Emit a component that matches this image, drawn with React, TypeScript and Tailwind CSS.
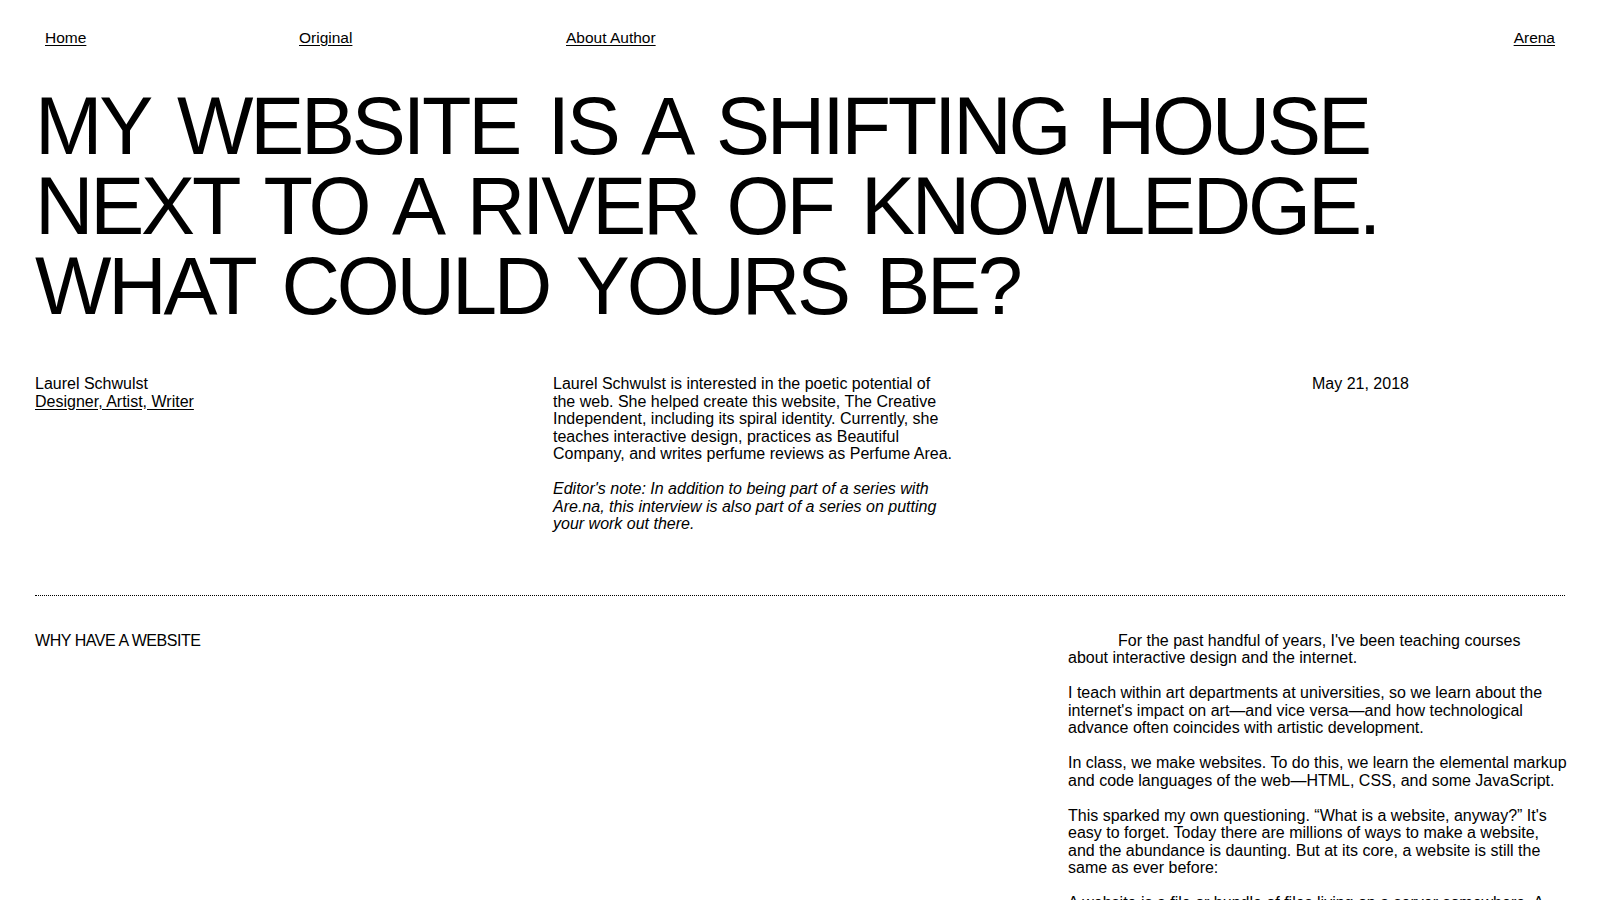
export default function App() {
  return (
    <div className="min-h-screen bg-white text-black font-['Liberation_Sans',Arial,sans-serif]">
      <nav className="flex pt-[29px] px-[45px] text-[15.5px] leading-[18px]">
        <a href="#" className="w-[254px] underline underline-offset-2">
          Home
        </a>
        <a href="#" className="w-[267px] underline underline-offset-2">
          Original
        </a>
        <a href="#" className="underline underline-offset-2">
          About Author
        </a>
        <a href="#" className="ml-auto underline underline-offset-2">
          Arena
        </a>
      </nav>

      <header className="px-[35px] mt-[39px]">
        <h1 className="text-[81px] leading-[80px] tracking-[-3.2px] [word-spacing:9px] font-normal">
          MY WEBSITE IS A SHIFTING HOUSE NEXT TO A RIVER OF KNOWLEDGE. WHAT COULD YOURS BE?
        </h1>
      </header>

      <section className="grid grid-cols-[518px_759px_1fr] px-[35px] mt-[49px] text-[16px] leading-[17.5px]">
        <div>
          <div>Laurel Schwulst</div>
          <a href="#" className="underline underline-offset-2">
            Designer, Artist, Writer
          </a>
        </div>
        <div className="max-w-[400px]">
          <p className="mb-[17.5px]">
            Laurel Schwulst is interested in the poetic potential of the web. She helped create this
            website, The Creative Independent, including its spiral identity. Currently, she teaches
            interactive design, practices as Beautiful Company, and writes perfume reviews as Perfume
            Area.
          </p>
          <p className="italic">
            Editor's note: In addition to being part of a series with Are.na, this interview is also
            part of a series on putting your work out there.
          </p>
        </div>
        <div>May 21, 2018</div>
      </section>

      <div className="mx-[35px] mt-[62px] border-t border-dotted border-black" />

      <section className="grid grid-cols-[1033px_1fr] pl-[35px] pr-[28px] pt-[36px] text-[16px] leading-[17.5px]">
        <h2 className="font-normal tracking-[-0.45px]">WHY HAVE A WEBSITE</h2>
        <div className="max-w-[502px] space-y-[17.5px]">
          <p className="indent-[50px]">
            For the past handful of years, I've been teaching courses
            <br />
            about interactive design and the internet.
          </p>
          <p>
            I teach within art departments at universities, so we learn about the internet's impact on
            art—and vice versa—and how technological advance often coincides with artistic development.
          </p>
          <p>
            In class, we make websites. To do this, we learn the elemental markup and code languages of
            the web—HTML, CSS, and some JavaScript.
          </p>
          <p>
            This sparked my own questioning. “What is a website, anyway?” It's easy to forget. Today
            there are millions of ways to make a website,
            <br />
            and the abundance is daunting. But at its core, a website is still the same as ever before:
          </p>
          <p>
            A website is a file or bundle of files living on a server somewhere. A website has an
            address, and anyone with that address can visit it.
          </p>
        </div>
      </section>
    </div>
  );
}
